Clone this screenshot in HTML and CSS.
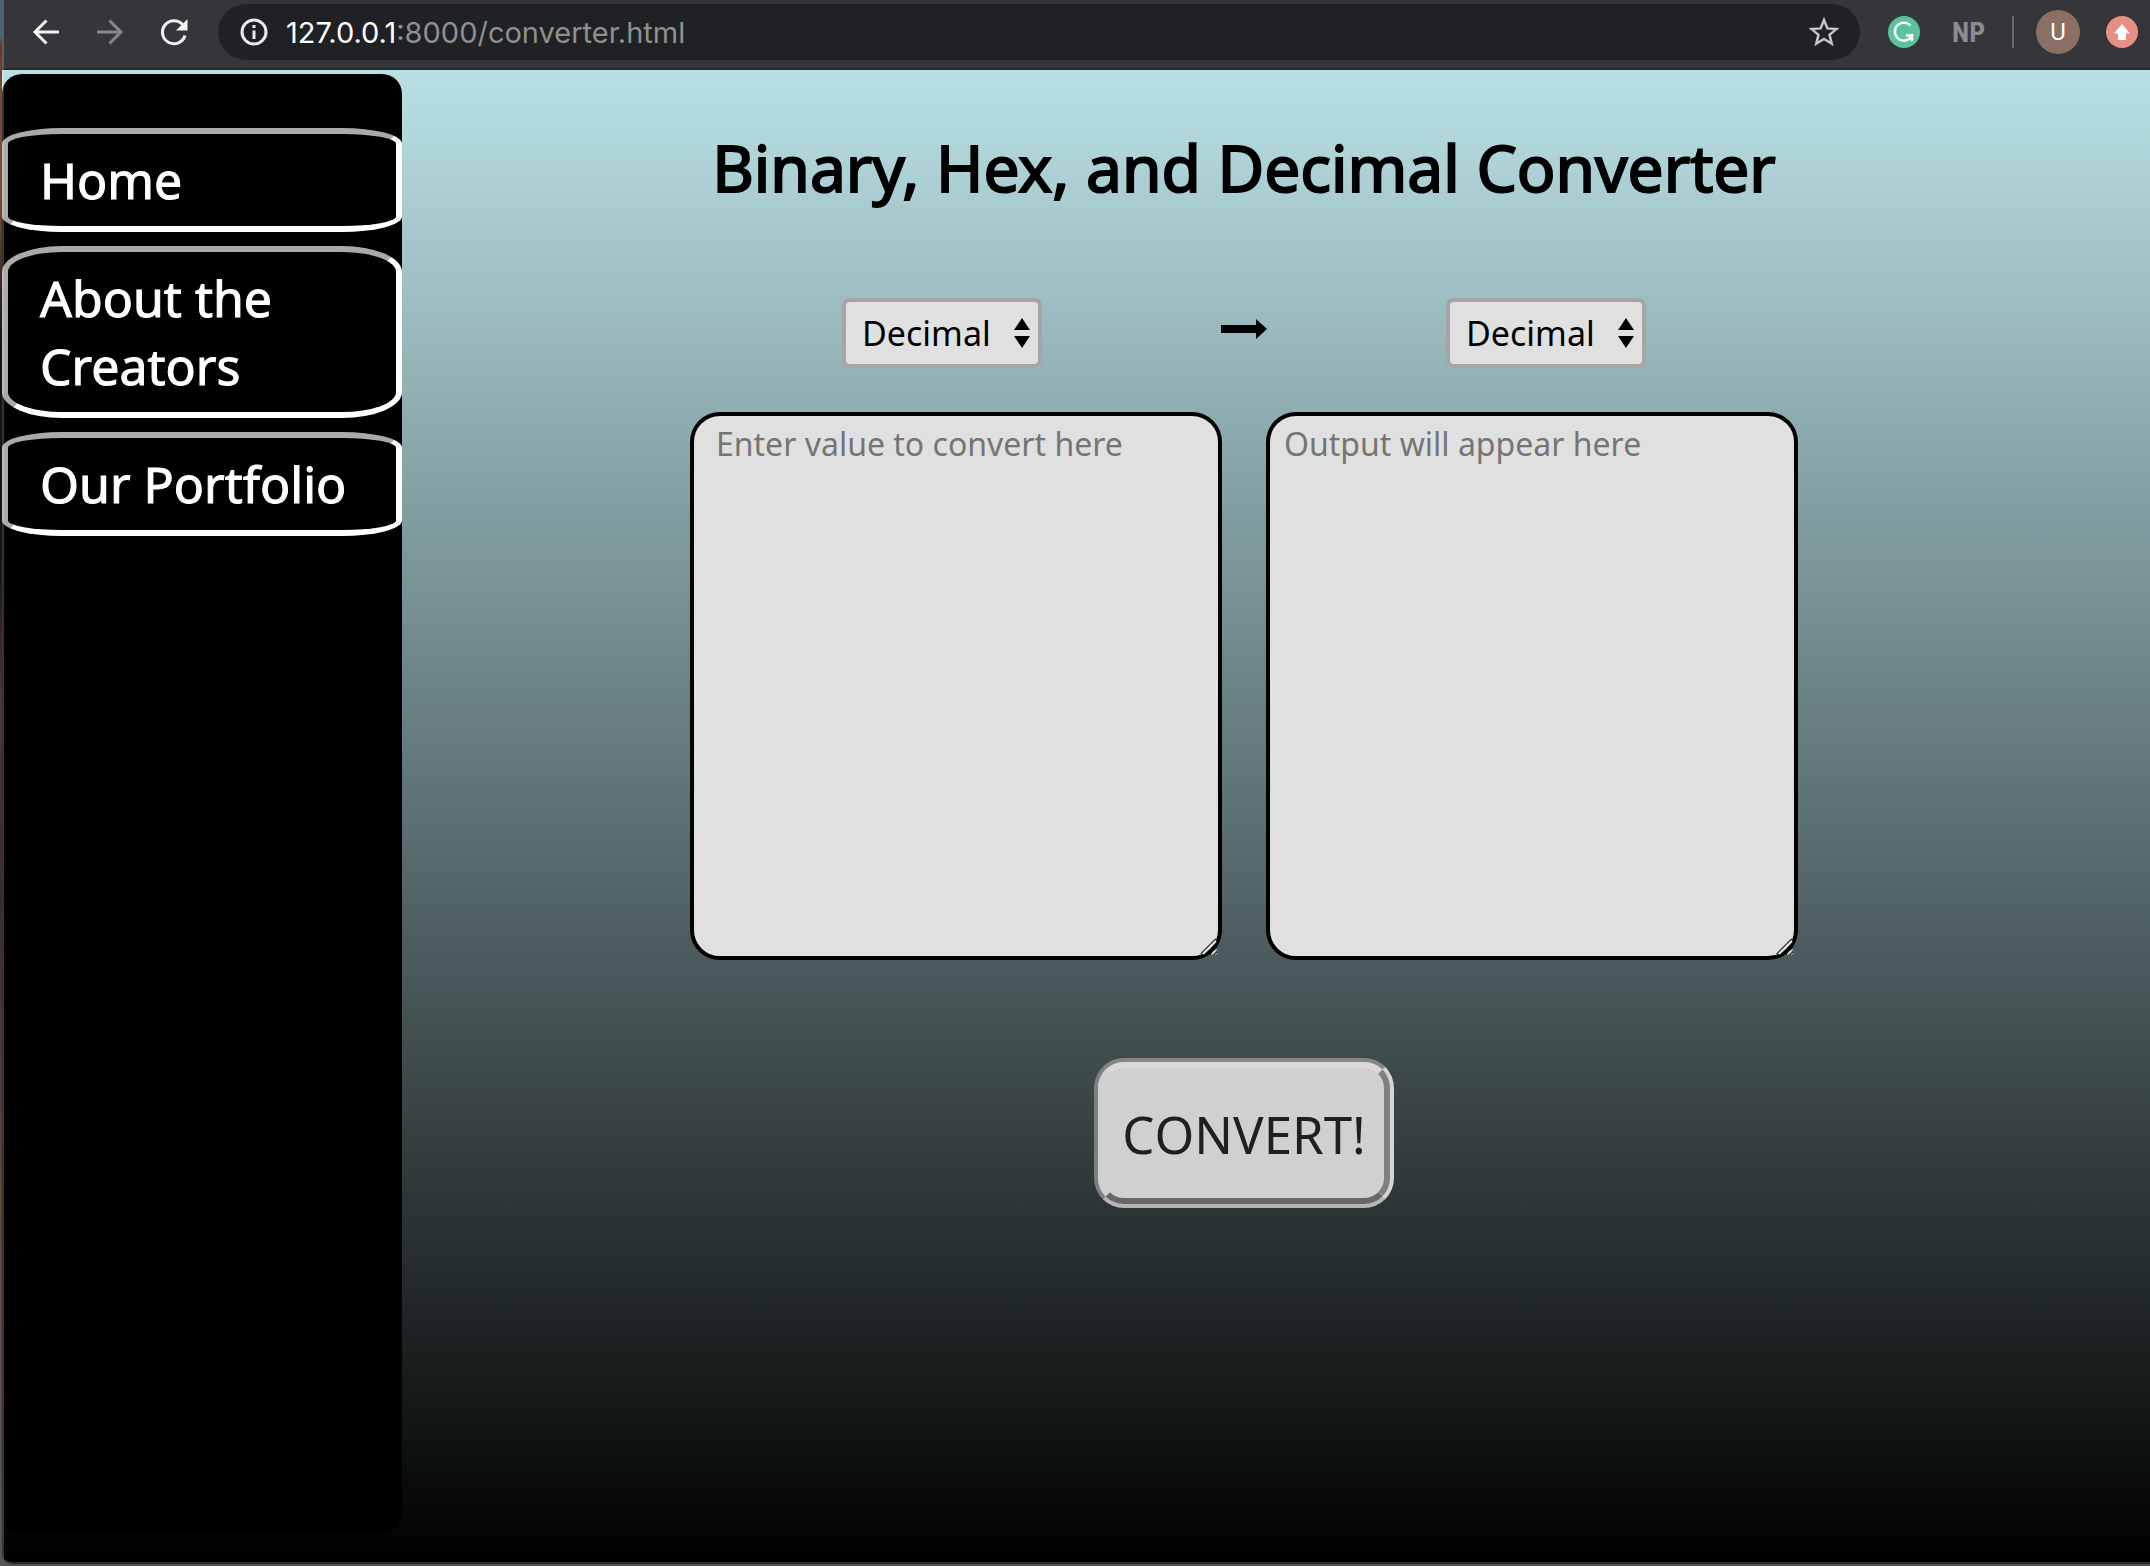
FILE: index.html
```html
<!DOCTYPE html>
<html lang="en">
<head>
<meta charset="utf-8">
<title>Binary, Hex, and Decimal Converter</title>
<link rel="stylesheet" href="styles.css">
</head>
<body>
<div class="window">
  <header class="toolbar">
    <button class="tool" type="button" aria-label="Back">
      <svg width="32" height="32" viewBox="0 0 32 32" fill="none" stroke="#f1f3f4" stroke-width="3"><path d="M29 16H5M16.500 4.500L5 16l11.500 11.500"/></svg>
    </button>
    <button class="tool" type="button" aria-label="Forward">
      <svg width="32" height="32" viewBox="0 0 32 32" fill="none" stroke="#88898b" stroke-width="3"><path d="M3 16h24M15.500 4.500L27 16 15.500 27.500"/></svg>
    </button>
    <button class="tool" type="button" aria-label="Reload">
      <svg width="32" height="32" viewBox="0 0 32 32"><path d="M27 19.500A11.500 11.500 0 1 1 24.500 8.500" fill="none" stroke="#f1f3f4" stroke-width="3"/><path d="M29.500 3v11.500H18z" fill="#f1f3f4"/></svg>
    </button>
    <div class="address">
      <svg width="28" height="28" viewBox="0 0 28 28"><circle cx="14" cy="14" r="12" fill="none" stroke="#e8eaed" stroke-width="3"/><path d="M12.500 7h3v3h-3zM12.500 12.500h3V21h-3z" fill="#e8eaed"/></svg>
      <span class="url"><span class="host">127.0.0.1</span>:8000/converter.html</span>
      <button class="star" type="button" aria-label="Bookmark">
        <svg width="32" height="32" viewBox="0 0 32 32"><path d="M16 4l3.400 8.400 9 .700-6.900 5.800 2.200 8.800L16 23l-7.700 4.700 2.200-8.800-6.900-5.800 9-.700z" fill="none" stroke="#c4c5c7" stroke-width="2.500"/></svg>
      </button>
    </div>
    <svg class="grammarly" width="32" height="32" viewBox="0 0 32 32"><circle cx="16" cy="16" r="16" fill="#5ac2a0"/><path d="M22.500 9.500A9 9 0 1 0 24 19.500h-6M24 18v7" fill="none" stroke="#fff" stroke-width="2.400"/></svg>
    <span class="np">NP</span>
    <span class="divider"></span>
    <button class="avatar" type="button">U</button>
    <svg width="32" height="32" viewBox="0 0 32 32"><circle cx="16" cy="16" r="16" fill="#e78f85"/><path d="M16 8l8 9.500h-4V24h-8v-6.500H8z" fill="#fff"/></svg>
  </header>
  <div class="page">
    <nav class="sidebar">
      <a href="#home">Home</a>
      <a href="#about">About the Creators</a>
      <a href="#portfolio">Our Portfolio</a>
    </nav>
    <main class="main">
      <h1>Binary, Hex, and Decimal Converter</h1>
      <div class="bases">
        <div class="select">
          <select aria-label="Convert from"><option>Decimal</option><option>Binary</option><option>Hex</option></select>
          <svg width="16" height="32" viewBox="0 0 16 32"><path d="M8 1l8 12H0zM8 31l8-12H0z"/></svg>
        </div>
        <svg class="arrow" width="46" height="20" viewBox="0 0 46 20"><path d="M0 6h35V0l11 10-11 10v-6H0z"/></svg>
        <div class="select">
          <select aria-label="Convert to"><option>Decimal</option><option>Binary</option><option>Hex</option></select>
          <svg width="16" height="32" viewBox="0 0 16 32"><path d="M8 1l8 12H0zM8 31l8-12H0z"/></svg>
        </div>
      </div>
      <div class="values">
        <div class="field">
          <textarea class="input" aria-label="Value" placeholder="Enter value to convert here"></textarea>
          <svg width="24" height="24" viewBox="0 0 24 24" fill="none"><path d="M3 18L18 3" stroke="#444" stroke-width="2"/><path d="M5 18L18 5" stroke="#eee" stroke-width="2"/><path d="M14 18l4-4" stroke="#ccc" stroke-width="2"/></svg>
        </div>
        <div class="field">
          <textarea aria-label="Output" placeholder="Output will appear here"></textarea>
          <svg width="24" height="24" viewBox="0 0 24 24" fill="none"><path d="M3 18L18 3" stroke="#444" stroke-width="2"/><path d="M5 18L18 5" stroke="#eee" stroke-width="2"/><path d="M14 18l4-4" stroke="#ccc" stroke-width="2"/></svg>
        </div>
      </div>
      <button class="convert" type="button"><span>CONVERT!</span></button>
    </main>
  </div>
</div>
</body>
</html>
```
FILE: styles.css
```css
* { box-sizing: border-box; }

body {
  margin: 0;
  min-height: 100vh;
  display: flex;
  padding: 0 0 2px 2px;
  background: linear-gradient(#46647a 0, #46647a 36px, #7a2b2b 46px, #7a4a33 90px, #7d4a2c 200px, #141420 340px, #141420 560px, #5c3030 700px, #3a2a30 900px, #6b4038 1200px, #555 1564px);
  font-family: "Noto Sans", sans-serif;
}

button { font-family: inherit; border: 0; padding: 0; background: none; }
svg { display: block; flex: none; }

.window {
  position: relative;
  flex: 1;
  display: flex;
  flex-direction: column;
  border-bottom: 2px solid #2b2b2b;
  border-bottom-left-radius: 10px;
  overflow: hidden;
}

/* light rim on the left side of the window */
.window::after {
  content: "";
  position: absolute;
  inset: 0 auto 0 0;
  width: 2px;
  background: rgba(255, 255, 255, .2);
}

.toolbar {
  display: flex;
  align-items: center;
  height: 70px;
  padding: 0 12px 4px 28px;
  background: #35363a;
  border-bottom: 2px solid #28292b;
}

.tool { margin-right: 32px; }
.tool:nth-child(3) { margin-right: 28px; }

.address {
  flex: 1;
  display: flex;
  align-items: center;
  height: 56px;
  margin-right: 28px;
  padding: 0 20px 0 22px;
  border-radius: 28px;
  background: #202124;
}

.url {
  flex: 1;
  margin-left: 18px;
  font: 29px Inter, sans-serif;
  color: #8f9092;
}
.host { color: #fff; }

.np {
  width: 32px;
  margin-left: 32px;
  font: bold 28px "Liberation Sans Narrow", "Roboto Condensed", "Liberation Sans", sans-serif;
  color: #8c8c8e;
}

.divider {
  width: 2px;
  height: 32px;
  margin: 0 22px 0 28px;
  background: #67686b;
}

.avatar {
  width: 44px;
  height: 44px;
  margin-right: 26px;
  border-radius: 50%;
  background: #8b6e64;
  color: #fff;
  font: 24px Roboto, sans-serif;
}

.page {
  flex: 1;
  display: flex;
  background: linear-gradient(#b9e0e5, #000);
}

.sidebar {
  flex: none;
  display: flex;
  flex-direction: column;
  gap: 14px;
  width: 400px;
  margin: 4px 0 28px;
  padding-top: 54px;
  border-radius: 20px;
  background: #000;
}

.sidebar a {
  padding: 12px 32px;
  border: 6px solid;
  border-color: #aaa #fff #fff #aaa;
  border-radius: 15%;
  font-size: 50px;
  line-height: 68px;
  color: #fff;
  text-decoration: none;
  -webkit-text-stroke: 1px #fff;
}

.main {
  flex: 1;
  display: flex;
  flex-direction: column;
  align-items: center;
  padding: 53px 64px 0 0;
}

h1 {
  margin: 0 0 85px;
  font-size: 64px;
  line-height: 90px;
  font-weight: 400;
  -webkit-text-stroke: 2px #000;
}

.bases {
  display: flex;
  align-items: center;
  justify-content: space-between;
  width: 804px;
  margin-bottom: 44px;
}

.arrow { margin-bottom: 8px; }

.select { position: relative; }

.select select {
  appearance: none;
  display: block;
  width: 200px;
  height: 70px;
  padding: 0 16px;
  border: 4px solid #a5a5a5;
  border-radius: 8px;
  background: #e0e0e0;
  color: #000;
  font: 34px "Noto Sans", sans-serif;
}

.select svg {
  position: absolute;
  top: 19px;
  right: 12px;
  pointer-events: none;
}

.values {
  display: flex;
  gap: 44px;
  width: 1108px;
  margin-bottom: 98px;
}

.field {
  position: relative;
  flex: 1;
}

.field svg {
  position: absolute;
  right: 0;
  bottom: 0;
  pointer-events: none;
}

textarea {
  display: block;
  width: 100%;
  height: 548px;
  margin: 0;
  padding: 6px 14px;
  border: 4px solid #000;
  border-radius: 30px;
  background: #e0e0e0;
  font: 32px/44px "Noto Sans", sans-serif;
}
textarea.input { padding-left: 22px; }
textarea::placeholder { color: #757575; }

.convert {
  width: 300px;
  height: 150px;
  border: 4px solid;
  border-color: #868686 #d5d5d5 #b5b5b5 #7f7f7f;
  border-radius: 30px;
  background: #d0d0d0;
  color: #1f1f1f;
  font-size: 51px;
  font-kerning: none;
}

.convert span {
  display: flex;
  align-items: center;
  justify-content: center;
  height: 100%;
  padding-top: 2px;
  border: 6px solid;
  border-color: #d9d9d9 #7f7f7f #676767 #d0d0d0;
  border-radius: 26px;
}
```
